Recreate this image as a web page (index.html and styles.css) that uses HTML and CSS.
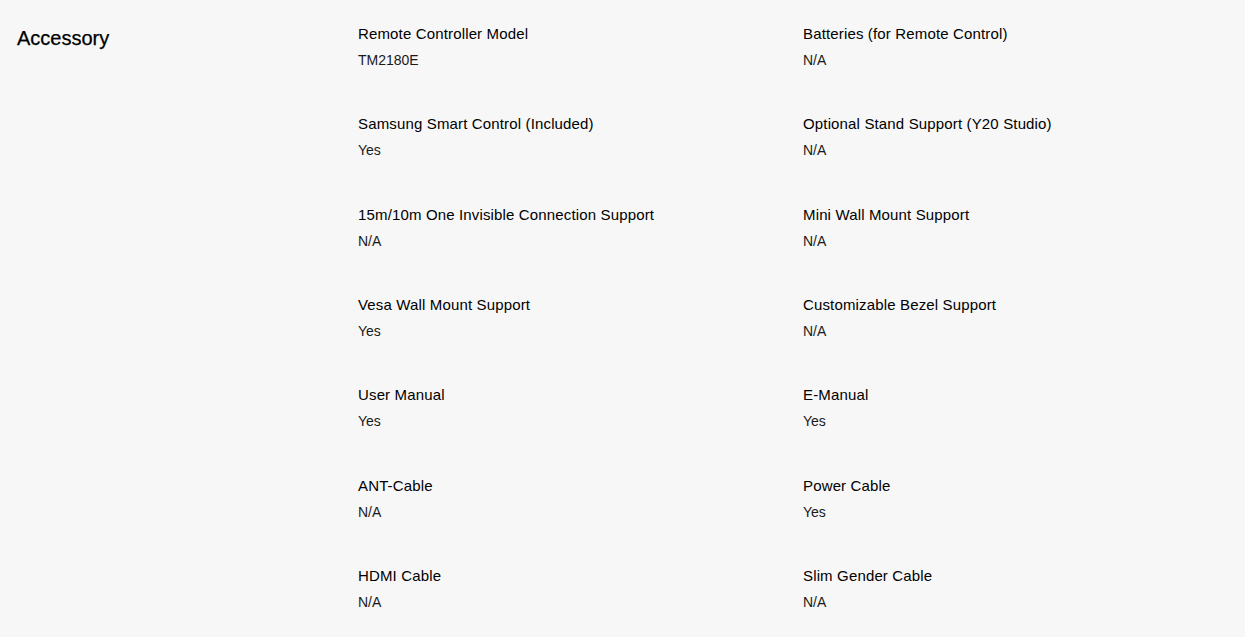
FILE: index.html
```html
<!DOCTYPE html>
<html lang="en">
<head>
<meta charset="utf-8">
<title>Accessory</title>
<link rel="stylesheet" href="styles.css">
</head>
<body>
<section class="spec">
  <h2 class="spec-title">Accessory</h2>
  <div class="spec-grid">
    <div class="item"><div class="label">Remote Controller Model</div><div class="value">TM2180E</div></div>
    <div class="item"><div class="label">Batteries (for Remote Control)</div><div class="value">N/A</div></div>
    <div class="item"><div class="label">Samsung Smart Control (Included)</div><div class="value">Yes</div></div>
    <div class="item"><div class="label">Optional Stand Support (Y20 Studio)</div><div class="value">N/A</div></div>
    <div class="item"><div class="label">15m/10m One Invisible Connection Support</div><div class="value">N/A</div></div>
    <div class="item"><div class="label">Mini Wall Mount Support</div><div class="value">N/A</div></div>
    <div class="item"><div class="label">Vesa Wall Mount Support</div><div class="value">Yes</div></div>
    <div class="item"><div class="label">Customizable Bezel Support</div><div class="value">N/A</div></div>
    <div class="item"><div class="label">User Manual</div><div class="value">Yes</div></div>
    <div class="item"><div class="label">E-Manual</div><div class="value">Yes</div></div>
    <div class="item"><div class="label">ANT-Cable</div><div class="value">N/A</div></div>
    <div class="item"><div class="label">Power Cable</div><div class="value">Yes</div></div>
    <div class="item"><div class="label">HDMI Cable</div><div class="value">N/A</div></div>
    <div class="item"><div class="label">Slim Gender Cable</div><div class="value">N/A</div></div>
  </div>
</section>
</body>
</html>
```

FILE: styles.css
```css
html, body {
  margin: 0;
  padding: 0;
  background: #f7f7f7;
}
body {
  font-family: "Liberation Sans", Arial, sans-serif;
  color: #000;
  height: 637px;
  overflow: hidden;
}
.spec {
  display: grid;
  grid-template-columns: 341px 1fr;
  padding: 24px 0 0 17px;
}
.spec-title {
  margin: 2px 0 0 0;
  font-size: 20px;
  line-height: 24px;
  font-weight: normal;
  color: #000;
  -webkit-text-stroke: 0.25px #000;
}
.spec-grid {
  display: grid;
  grid-template-columns: 445px 445px;
  row-gap: 44.33px;
}
.item {
  display: flex;
  flex-direction: column;
  gap: 6px;
}
.label {
  font-size: 15px;
  line-height: 20px;
  letter-spacing: 0.15px;
  color: #000;
}
.value {
  font-size: 14px;
  line-height: 20px;
  color: #1a1a1a;
}
```
